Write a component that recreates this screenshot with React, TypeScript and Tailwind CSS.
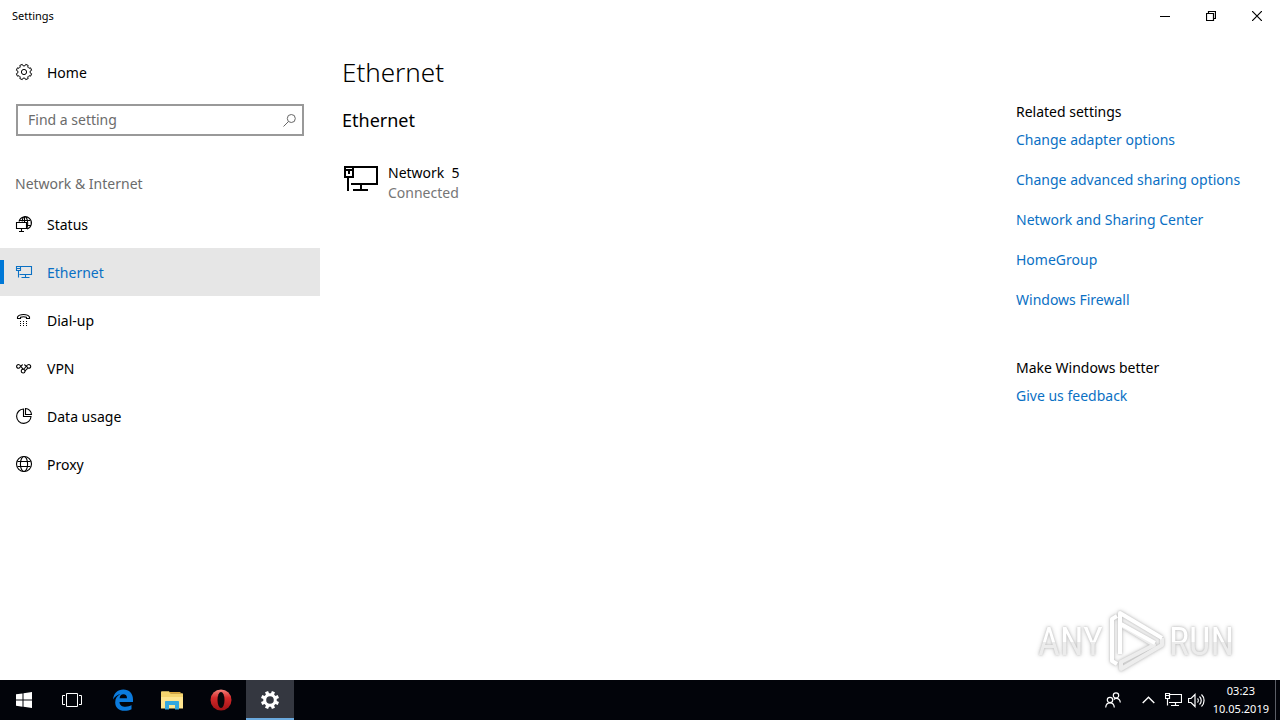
import type { ReactNode } from 'react';
import clsx from 'clsx';

const navItems = [
  { label: 'Status', icon: <StatusIcon /> },
  { label: 'Ethernet', icon: <EthernetIcon />, active: true },
  { label: 'Dial-up', icon: <DialUpIcon /> },
  { label: 'VPN', icon: <VpnIcon /> },
  { label: 'Data usage', icon: <DataUsageIcon /> },
  { label: 'Proxy', icon: <ProxyIcon /> },
];

const relatedLinks = [
  'Change adapter options',
  'Change advanced sharing options',
  'Network and Sharing Center',
  'HomeGroup',
  'Windows Firewall',
];

// Outline of a toothed wheel centred on 0,0
function gearPath(outer: number, inner: number, tip: number, root: number) {
  const points: string[] = [];
  for (let i = 0; i < 8; i++) {
    const a = (i * Math.PI) / 4 + Math.PI / 8;
    for (const [offset, r] of [[-root, inner], [-tip, outer], [tip, outer], [root, inner]]) {
      points.push(`${(Math.sin(a + offset) * r).toFixed(2)} ${(-Math.cos(a + offset) * r).toFixed(2)}`);
    }
  }
  return `M${points.join('L')}Z`;
}

function Icon({ children }: { children: ReactNode }) {
  return (
    <svg width="16" height="16" viewBox="0 0 16 16" fill="none" stroke="currentColor" strokeWidth="1.1" className="shrink-0 overflow-visible" aria-hidden="true">
      {children}
    </svg>
  );
}

function HomeIcon() {
  return (
    <Icon>
      <g transform="translate(8 8)" strokeLinejoin="round" strokeWidth="1">
        <path d={gearPath(7.8, 6.2, 0.17, 0.25)} />
        <circle r="2.6" />
      </g>
    </Icon>
  );
}

function StatusIcon() {
  return (
    <Icon>
      <path d="M3 5.500A6.300 6.300 0 1 1 11 13M4 4.500h10M11 9.500h3.500M6.200 5.500C6.400 2.700 7.500.7 8.800.7s2.900 2.600 2.900 6.300c0 2-.3 3.500-.7 5" />
      <path d="M.5 6.500h10v6H.5zM5.500 12.500v3M3 15.500h5M8.500.5v6" />
    </Icon>
  );
}

function EthernetIcon() {
  return (
    <Icon>
      <path d="M4.500 2.500h11v8H3.500M.5 2.500h4v4h-4zM2.500 6.500v7M9.500 10.500v3M5.500 13.500h8M1 4.500h3" />
    </Icon>
  );
}

function DialUpIcon() {
  return (
    <Icon>
      <path d="M1.500 6.500V5C2.500 3.300 5 2.500 7.500 2.500s5 .8 6 2.500v1.500h-3v-1.200C9 4.700 6 4.700 4.500 5.300v1.200z" />
      <path d="M4 9.500h1M7 9.500h1M10 9.500h1M4 11.500h1M7 11.500h1M10 11.500h1M4 13.500h1M7 13.500h1M10 13.500h1" />
    </Icon>
  );
}

function VpnIcon() {
  return (
    <Icon>
      <path d="M2.500 4.500a1.900 1.900 0 1 0 0 3.800c1.700 0 2.200-3.600 4.500-3.600M2.500 4.500c2.200 0 2.800 3.300 4.800 4.700" />
      <path d="M12.800 8.300a1.900 1.900 0 1 0 0-3.800c-2.800 0-3.300 4.700-5.700 4.700a1.900 1.900 0 1 0 1.900 2c0-1.500-1.200-2-1.900-2" />
      <path d="M12.800 8.300c-1.800 0-2.400-3.600-4.800-3.600M12.800 8.300c-2 0-2.600 1.300-3.800 2.900" />
    </Icon>
  );
}

function DataUsageIcon() {
  return (
    <Icon>
      <path d="M7.500 1A7.200 7.200 0 1 0 15 8.500H7.500z" />
      <path d="M9.500.500v6h6A6.200 6.200 0 0 0 9.500.500z" />
    </Icon>
  );
}

function ProxyIcon() {
  return (
    <Icon>
      <circle cx="8" cy="8" r="7.500" />
      <ellipse cx="8" cy="8" rx="3.600" ry="7.500" />
      <path d="M1.500 5.500h13M1.500 10.500h13" />
    </Icon>
  );
}

function TitleBar() {
  return (
    <header className="flex h-8 items-center justify-between">
      <span className="pl-3 text-[11px]">Settings</span>
      <div className="flex h-full">
        <button aria-label="Minimize" className="flex w-[46px] items-center justify-center">
          <svg width="10" height="10" fill="none" stroke="currentColor"><path d="M0 5.500h10" /></svg>
        </button>
        <button aria-label="Restore" className="flex w-[46px] items-center justify-center">
          <svg width="10" height="10" fill="none" stroke="currentColor" strokeWidth="1.200"><path d="M.5 2.500h7v7h-7zM2.500 2.500v-2h7v7h-2" /></svg>
        </button>
        <button aria-label="Close" className="flex w-[46px] items-center justify-center">
          <svg width="10" height="10" fill="none" stroke="currentColor" strokeWidth="1.200"><path d="M0 0l10 10M10 0L0 10" /></svg>
        </button>
      </div>
    </header>
  );
}

function Sidebar() {
  return (
    <aside className="w-80 shrink-0 pt-4">
      <a href="#home" className="flex h-12 items-center gap-[15px] px-4">
        <HomeIcon />
        <span className="pt-px">Home</span>
      </a>
      <div className="mx-4 mt-2 flex h-8 items-center border-2 border-[#999999] pr-1.5">
        <input
          type="text"
          aria-label="Find a setting"
          placeholder="Find a setting"
          className="min-w-0 flex-1 bg-transparent px-2.5 outline-none placeholder:text-[#6b6b6b]"
        />
        <svg width="13" height="13" fill="none" stroke="#666" aria-hidden="true">
          <circle cx="8.300" cy="4.500" r="4" />
          <path d="M5.500 7.500L.500 12.500" />
        </svg>
      </div>
      <h3 className="mt-9 px-[15px] pt-0.5 leading-5 text-[#6b6b6b]">Network &amp; Internet</h3>
      <nav className="mt-1.5">
        {navItems.map((item) => (
          <a
            key={item.label}
            href={`#${item.label}`}
            className={clsx('flex h-12 items-center', item.active && 'bg-[#e6e6e6] text-[#0a70c4]')}
          >
            <span className={clsx('h-6 w-1', item.active && 'bg-[#0078d7]')} />
            <span className="flex items-center gap-[15px] pl-3">
              {item.icon}
              <span className="pt-px">{item.label}</span>
            </span>
          </a>
        ))}
      </nav>
    </aside>
  );
}

function RelatedSettings() {
  return (
    <aside className="w-[264px] shrink-0 pt-[70px] leading-5">
      <h3>Related settings</h3>
      <ul className="mt-2 space-y-5">
        {relatedLinks.map((link) => (
          <li key={link}>
            <a href="#related" className="block whitespace-nowrap text-[#0a70c4]">{link}</a>
          </li>
        ))}
      </ul>
      <h3 className="mt-12">Make Windows better</h3>
      <a href="#feedback" className="mt-2 block text-[#0a70c4]">Give us feedback</a>
    </aside>
  );
}

function Watermark() {
  return (
    <div
      className="absolute right-[46px] bottom-2 flex items-center gap-1 text-[38px] leading-none text-white [filter:drop-shadow(0_0_1px_#bdbdbd)_drop-shadow(0_0_2px_#d6d6d6)]"
      style={{ fontFamily: '"Roboto Condensed", "Liberation Sans Narrow", Roboto, sans-serif' }}
    >
      <span className="bg-gradient-to-b from-white from-55% to-[#ececec] to-55% bg-clip-text pt-1 text-transparent">ANY</span>
      <svg width="58" height="64" viewBox="0 0 58 64" fill="none" stroke="#fff" strokeWidth="4" strokeLinejoin="round" aria-hidden="true">
        <path d="M10 8L5 11v42l5 3" />
        <path d="M14 17l33 20L14 54v7l41-24v-7" stroke="#ededed" />
        <path d="M13 46V5l42 25M14 16l34 19" />
      </svg>
      <span className="bg-gradient-to-b from-white from-55% to-[#ececec] to-55% bg-clip-text pt-1 text-transparent">RUN</span>
    </div>
  );
}

const taskButton = 'flex w-12 items-center justify-center';

function Taskbar() {
  return (
    <footer className="flex h-10 justify-between bg-[#02040a] text-white">
      <div className="flex">
        <button aria-label="Start" className={taskButton}>
          <svg width="16" height="16" fill="currentColor"><path d="M0 2.300l6.500-.9v6.200H0zM7.500 1.200L16 0v7.600H7.500zM0 8.500h6.500v6.200L0 13.800zM7.500 8.500H16V16l-8.500-1.200z" /></svg>
        </button>
        <button aria-label="Task view" className={taskButton}>
          <svg width="20" height="14" fill="none" stroke="currentColor"><path d="M4.500.500h11v13h-11zM3 2.500H.500v9H3M17 2.500h2.500v9H17" /></svg>
        </button>
        <button aria-label="Edge" className="flex w-[54px] items-center justify-center">
          <svg width="20" height="22" viewBox="0 0 20 22" fill="#0b7bdd"><path d="M0 10.500C.7 4.200 4.500.500 10.300.500 16.300.500 20 4.600 20 10.400V13H6.500c.2 3.300 2.800 4.800 6 4.800 2.400 0 4.400-.7 6-1.700v4.100c-1.900 1-4.300 1.500-7 1.500-5.700 0-9.300-3.300-9.300-8.300 0-3.900 2-6.800 5.300-8.300C4.300 6 1.700 7.800 0 10.500zM6.600 9.300H14c0-2.500-1.200-4-3.600-4-2.200 0-3.500 1.500-3.800 4z" /></svg>
        </button>
        <button aria-label="File Explorer" className="flex w-11 items-center justify-center">
          <svg width="22" height="19" viewBox="0 0 22 19">
            <path d="M0 1.500C0 .7.400.300 1 .300h7l1.500 2H21c.6 0 1 .4 1 1V17H0z" fill="#f5d46e" />
            <path d="M9 1h10.500v1.500H9z" fill="#e0a93c" />
            <path d="M0 6h22v11.500H0z" fill="#ffe58f" />
            <path d="M4 18.500V11c0-.6.400-1 1-1h12c.6 0 1 .4 1 1v7.500h-4V14H8v4.500z" fill="#35a8de" />
          </svg>
        </button>
        <button aria-label="Opera" className="flex w-[52px] items-center justify-center pl-0.5">
          <svg width="22" height="22" viewBox="0 0 22 22">
            <defs>
              <linearGradient id="opera" x1="0" y1="0" x2="0" y2="1">
                <stop offset="0" stopColor="#f5827b" />
                <stop offset=".4" stopColor="#d3292a" />
                <stop offset="1" stopColor="#a01316" />
              </linearGradient>
            </defs>
            <circle cx="11" cy="11" r="10.500" fill="url(#opera)" />
            <ellipse cx="11" cy="11" rx="3.500" ry="8" fill="#07070b" />
          </svg>
        </button>
        <button aria-label="Settings" className="flex w-12 items-center justify-center border-b-2 border-[#6aa9de] bg-[#343740] pt-0.5">
          <svg width="20" height="20" viewBox="-10 -10 20 20" fill="currentColor" fillRule="evenodd">
            <path d={`${gearPath(9.2, 6.8, 0.18, 0.25)}M-3.800 0a3.800 3.800 0 1 0 7.600 0a3.800 3.800 0 1 0-7.600 0z`} />
          </svg>
        </button>
      </div>
      <div className="flex items-center">
        <button aria-label="People" className="mr-[21px]">
          <svg width="16" height="16" fill="none" stroke="currentColor" strokeWidth="1.200">
            <circle cx="5" cy="8" r="2.700" />
            <path d="M.7 15.500c.2-3 2-4.700 4.300-4.700s4.100 1.700 4.300 4.700" />
            <circle cx="11" cy="3.500" r="2.700" />
            <path d="M8.800 7.500c.7-.8 1.400-1.200 2.300-1.200 2.300 0 4 1.500 4.200 4.200" />
          </svg>
        </button>
        <button aria-label="Show hidden icons" className="mr-2.5">
          <svg width="13" height="8" fill="none" stroke="currentColor" strokeWidth="1.400"><path d="M.7 7l5.800-5.800L12.300 7" /></svg>
        </button>
        <button aria-label="Network" className="mr-1.5">
          <svg width="17" height="14" fill="none" stroke="currentColor" strokeWidth="1.200"><path d="M5 1.500h11.500v8H4M.500.500h4v5h-4zM2.500 5.500v7M10.500 9.500v3M6 12.500h8M1 2.500h3" /></svg>
        </button>
        <button aria-label="Volume" className="mr-2">
          <svg width="17" height="15" fill="none" stroke="currentColor" strokeWidth="1.200"><path d="M.5 5.500H3l4-4v12l-4-4H.5zM9.500 5.500c1 1 1 3 0 4M11.500 3.500c2.300 2.200 2.300 6 0 8M13.500 1.500c3.400 3.200 3.400 9 0 12" /></svg>
        </button>
        <div className="text-center text-[11px] leading-[18px]">
          <div>03:23</div>
          <div>10.05.2019</div>
        </div>
        <div className="ml-1.5 h-full w-[5px] border-l border-[#5b5e66]" />
      </div>
    </footer>
  );
}

export default function App() {
  return (
    <div className="flex min-h-screen flex-col bg-white text-sm text-black" style={{ fontFamily: '"Noto Sans", sans-serif' }}>
      <TitleBar />
      <div className="relative flex flex-1">
        <Sidebar />
        <main className="min-w-0 flex-1 px-[22px] pt-5">
          <h1 className="text-[26px] leading-10 font-light">Ethernet</h1>
          <h2 className="mt-3 text-lg leading-8">Ethernet</h2>
          <a href="#network" className="mt-[27px] flex items-start gap-2.5 leading-5">
            <svg width="36" height="28" viewBox="0 0 36 28" fill="none" stroke="currentColor" strokeWidth="2" className="mt-0.5" aria-hidden="true">
              <path d="M11 2h24v17H9M3 2h8v10H3zM6 12v14M19 19v6M11 25h15" />
              <path d="M4 5h6M7 5v4" />
            </svg>
            <div>
              <div className="whitespace-pre">Network  5</div>
              <div className="text-[#767676]">Connected</div>
            </div>
          </a>
        </main>
        <RelatedSettings />
        <Watermark />
      </div>
      <Taskbar />
    </div>
  );
}
